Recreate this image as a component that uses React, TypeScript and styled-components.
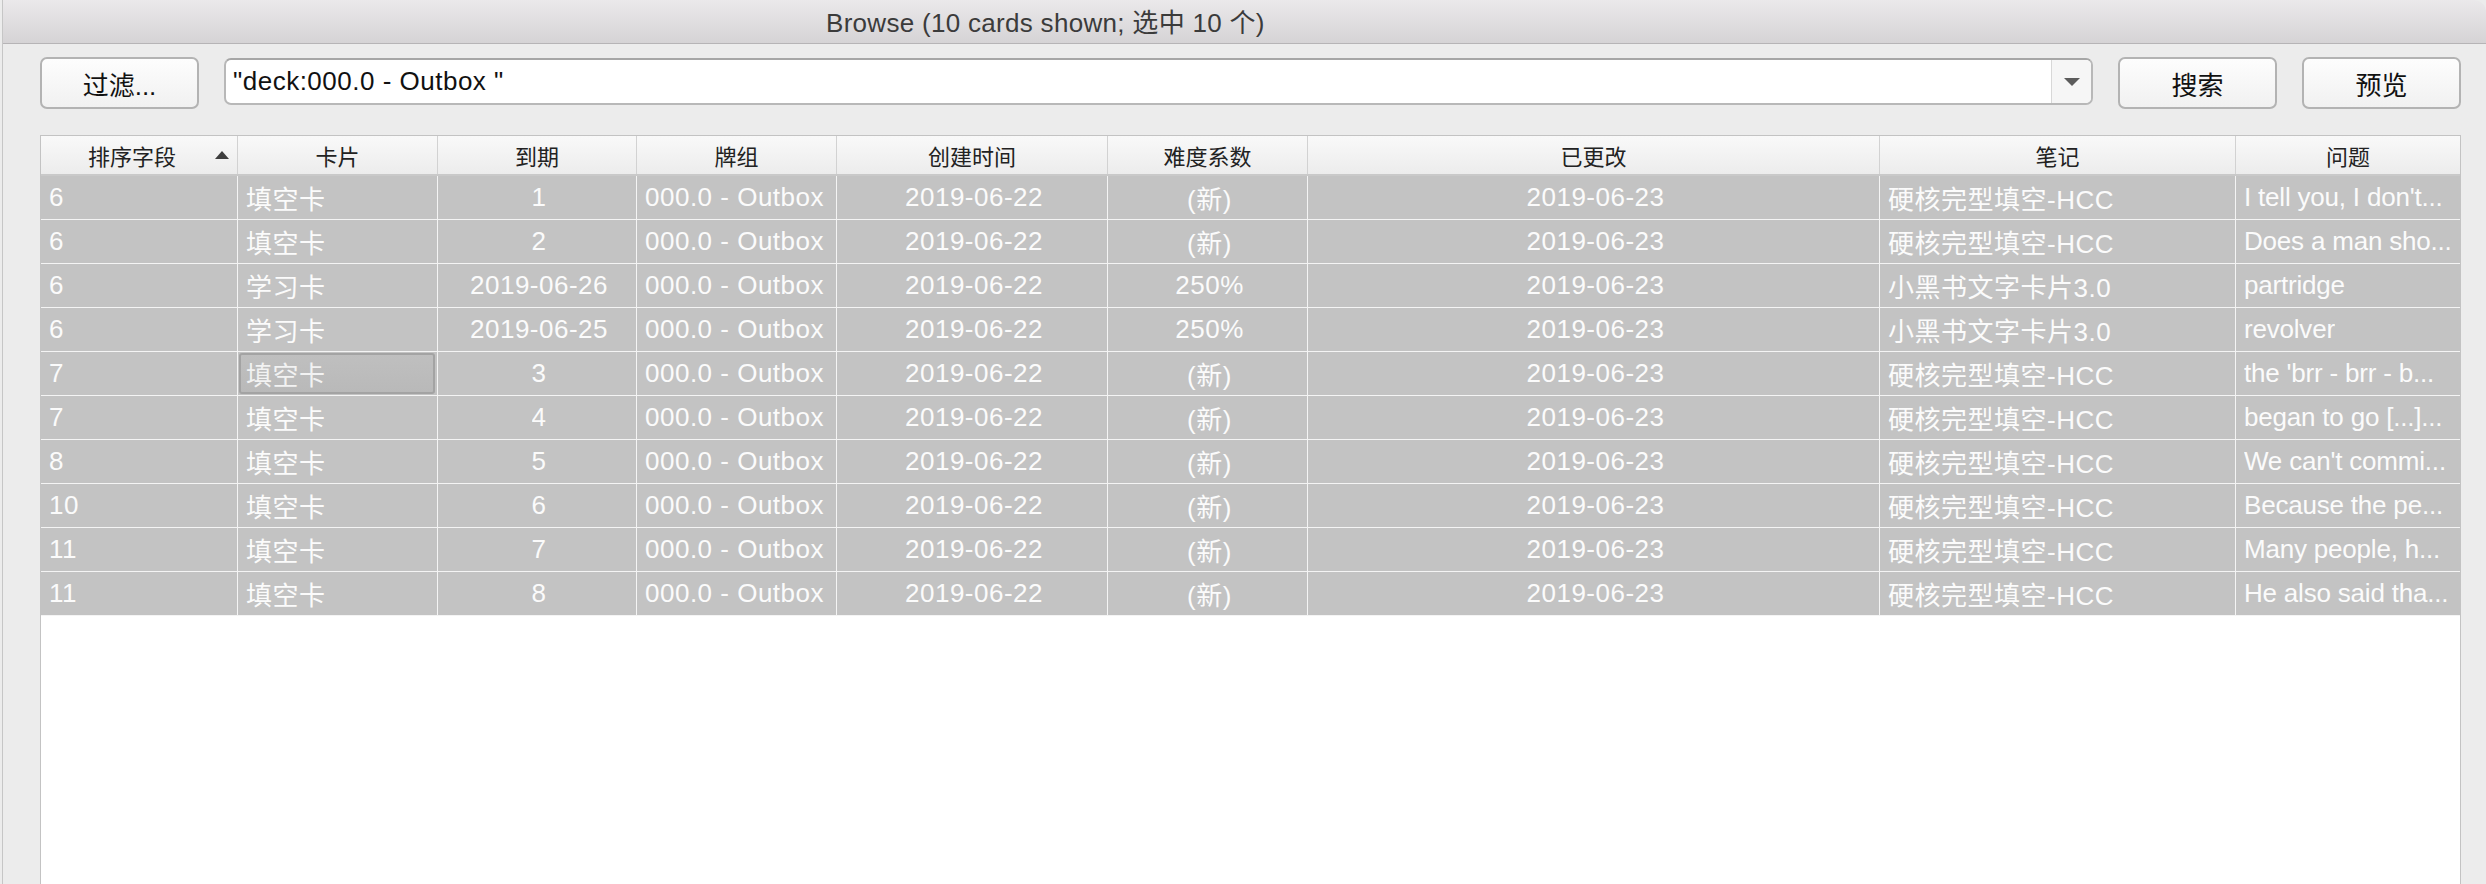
import styled, { createGlobalStyle } from 'styled-components'

const GlobalStyle = createGlobalStyle`
  html, body {
    margin: 0;
    padding: 0;
    background: #ececec;
  }
  body {
    font-family: 'Liberation Sans', 'Noto Sans CJK SC', sans-serif;
    overflow: hidden;
  }
`

interface CardRow {
  sortField: string
  card: string
  due: string
  deck: string
  created: string
  ease: string
  modified: string
  note: string
  question: string
}

const COLUMNS = [
  { key: 'sortField', title: '排序字段', width: 197, align: 'left' },
  { key: 'card', title: '卡片', width: 200, align: 'left' },
  { key: 'due', title: '到期', width: 199, align: 'center' },
  { key: 'deck', title: '牌组', width: 200, align: 'left' },
  { key: 'created', title: '创建时间', width: 271, align: 'center' },
  { key: 'ease', title: '难度系数', width: 200, align: 'center' },
  { key: 'modified', title: '已更改', width: 572, align: 'center' },
  { key: 'note', title: '笔记', width: 356, align: 'left' },
  { key: 'question', title: '问题', width: 224, align: 'left' }
] as const

const GRID = COLUMNS.map((c) => `${c.width}px`).join(' ')

const cloze = (sortField: string, due: string, question: string): CardRow => ({
  sortField,
  card: '填空卡',
  due,
  deck: '000.0 - Outbox',
  created: '2019-06-22',
  ease: '(新)',
  modified: '2019-06-23',
  note: '硬核完型填空-HCC',
  question
})

const study = (due: string, question: string): CardRow => ({
  sortField: '6',
  card: '学习卡',
  due,
  deck: '000.0 - Outbox',
  created: '2019-06-22',
  ease: '250%',
  modified: '2019-06-23',
  note: '小黑书文字卡片3.0',
  question
})

const ROWS: CardRow[] = [
  cloze('6', '1', "I tell you, I don't..."),
  cloze('6', '2', 'Does a man sho...'),
  study('2019-06-26', 'partridge'),
  study('2019-06-25', 'revolver'),
  cloze('7', '3', "the 'brr - brr - b..."),
  cloze('7', '4', 'began to go [...]...'),
  cloze('8', '5', "We can't commi..."),
  cloze('10', '6', 'Because the pe...'),
  cloze('11', '7', 'Many people, h...'),
  cloze('11', '8', 'He also said tha...')
]

// focused cell: row 5, 卡片 column
const FOCUS = { row: 4, col: 'card' }

const App = () => {
  return (
    <>
      <GlobalStyle />
      <Window>
        <TitleBar>
          <Title>Browse (10 cards shown; 选中 10 个)</Title>
        </TitleBar>
        <Toolbar>
          <PushButton>过滤...</PushButton>
          <Combo>
            <ComboInput>"deck:000.0 - Outbox "</ComboInput>
            <ComboArrow>
              <svg width="16" height="8" viewBox="0 0 16 8">
                <path d="M0 0 L16 0 L8 8 Z" fill="#5c5c5c" />
              </svg>
            </ComboArrow>
          </Combo>
          <PushButton>搜索</PushButton>
          <PushButton>预览</PushButton>
        </Toolbar>
        <TableView>
          <HeaderRow>
            {COLUMNS.map((col, i) => (
              <HeaderCell key={col.key}>
                <HeaderLabel>{col.title}</HeaderLabel>
                {i === 0 && (
                  <SortArrow width="14" height="8" viewBox="0 0 14 8">
                    <path d="M7 0 L14 8 L0 8 Z" fill="#3e3e3e" />
                  </SortArrow>
                )}
              </HeaderCell>
            ))}
          </HeaderRow>
          {ROWS.map((row, r) => (
            <Row key={r}>
              {COLUMNS.map((col) => (
                <Cell key={col.key} $align={col.align}>
                  {FOCUS.row === r && FOCUS.col === col.key ? (
                    <FocusBox>{row[col.key]}</FocusBox>
                  ) : (
                    <CellText $tight={col.key === 'question'}>{row[col.key]}</CellText>
                  )}
                </Cell>
              ))}
            </Row>
          ))}
        </TableView>
      </Window>
    </>
  )
}

const Window = styled.div`
  width: 2484px;
  height: 884px;
  display: flex;
  flex-direction: column;
  background: #ececec;
  border-top-right-radius: 12px;
  border-left: 1px solid #c6c6c6;
  margin-left: 2px;
  box-sizing: border-box;
  overflow: hidden;
`

const TitleBar = styled.div`
  height: 43px;
  flex-shrink: 0;
  display: flex;
  align-items: center;
  padding-left: 823px;
  background: linear-gradient(#ebe9eb, #d5d3d5);
  border-bottom: 1px solid #b6b4b6;
`

const Title = styled.span`
  font-size: 26px;
  letter-spacing: 0.3px;
  color: #3b3b3b;
  white-space: nowrap;
  margin-top: -2px;
`

const Toolbar = styled.div`
  display: flex;
  align-items: flex-start;
  gap: 25px;
  padding: 13px 25px 0 37px;
  height: 52px;
  flex-shrink: 0;
`

const PushButton = styled.button`
  width: 159px;
  height: 52px;
  flex-shrink: 0;
  box-sizing: border-box;
  border: 2px solid #b3b3b3;
  border-radius: 7px;
  background: linear-gradient(#fdfdfd, #f1f1f1);
  font-family: 'Liberation Sans', 'Noto Sans CJK SC', sans-serif;
  font-size: 26px;
  color: #111;
  padding: 0;
`

const Combo = styled.div`
  flex: 1;
  height: 47px;
  margin-top: 1px;
  display: flex;
  box-sizing: border-box;
  border: 2px solid #b8b8b8;
  border-top-color: #a6a6a6;
  border-radius: 7px;
  background: #fff;
  overflow: hidden;
`

const ComboInput = styled.div`
  flex: 1;
  display: flex;
  align-items: center;
  padding-left: 7px;
  font-size: 26px;
  letter-spacing: 0.5px;
  color: #111;
  white-space: pre;
  border-right: 1px solid #d8d8d8;
`

const ComboArrow = styled.div`
  width: 39px;
  display: flex;
  align-items: center;
  justify-content: center;
  background: #f6f6f6;
`

const TableView = styled.div`
  flex: 1;
  margin: 26px 25px 0 37px;
  background: #fff;
  border: 1px solid #c3c3c3;
  border-bottom: none;
`

const HeaderRow = styled.div`
  display: grid;
  grid-template-columns: ${GRID};
  height: 38px;
  background: linear-gradient(#f9f9f9, #ececec);
  border-bottom: 2px solid #c9c9c9;
`

const HeaderCell = styled.div`
  display: flex;
  align-items: center;
  border-right: 1px solid #d2d2d2;
  padding: 0 8px;
  min-width: 0;
  &:last-child {
    border-right: none;
  }
`

const HeaderLabel = styled.span`
  flex: 1;
  text-align: center;
  font-size: 22px;
  color: #222;
  white-space: nowrap;
`

const SortArrow = styled.svg`
  flex-shrink: 0;
`

const Row = styled.div`
  display: grid;
  grid-template-columns: ${GRID};
  height: 44px;
  box-sizing: border-box;
  background: #c3c3c3;
  border-bottom: 1px solid #f4f4f4;
`

const Cell = styled.div<{ $align: string }>`
  display: flex;
  align-items: center;
  justify-content: ${(p) => (p.$align === 'center' ? 'center' : 'flex-start')};
  border-right: 1px solid #f4f4f4;
  padding: 0 4px 0 8px;
  min-width: 0;
  overflow: hidden;
  &:last-child {
    border-right: none;
  }
`

const CellText = styled.span<{ $tight?: boolean }>`
  font-size: 26px;
  letter-spacing: ${(p) => (p.$tight ? '-0.2px' : '0.5px')};
  color: #fbfbfb;
  white-space: nowrap;
  overflow: hidden;
`

const FocusBox = styled.span`
  flex: 1;
  align-self: stretch;
  margin: 1px -2px 1px -7px;
  padding-left: 5px;
  display: flex;
  align-items: center;
  border: 2px solid #a3a3a3;
  border-radius: 3px;
  background: linear-gradient(#bfbfbf, #b9b9b9);
  font-size: 26px;
  letter-spacing: 0.5px;
  color: #f2f2f2;
  white-space: nowrap;
`

export default App
